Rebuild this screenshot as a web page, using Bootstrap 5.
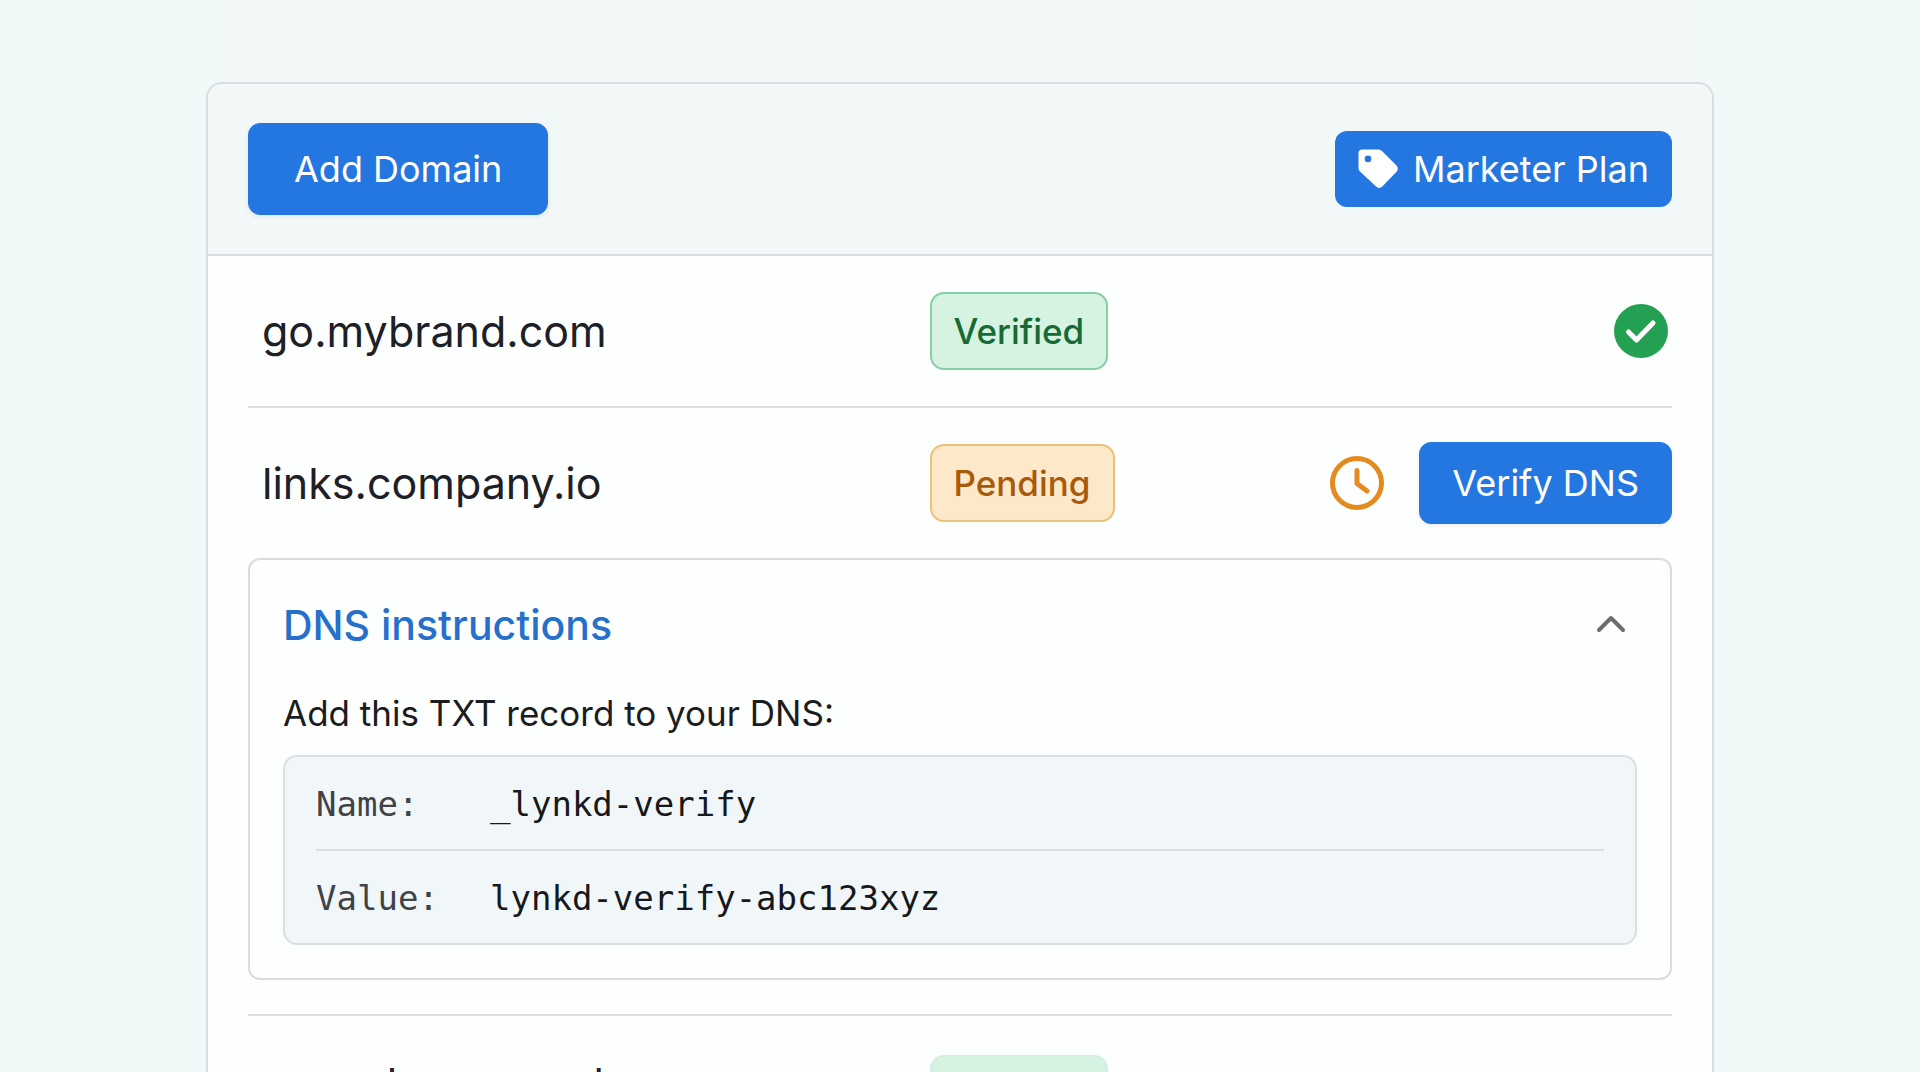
<!DOCTYPE html>
<html lang="en">
<head>
<meta charset="utf-8">
<meta name="viewport" content="width=device-width, initial-scale=1">
<title>Custom domains</title>
<link href="https://cdn.jsdelivr.net/npm/bootstrap@5.3.0/dist/css/bootstrap.min.css" rel="stylesheet">
<style>
  body { font-family: Inter, "Liberation Sans", sans-serif; color: #1d2027; background: linear-gradient(90deg, #f0f8f8, #f2f8f8 12%, #f2f8f8 88%, #f0f8f8); }
  .page { padding: 82px 24px 0; }
  .domains { max-width: 1508px; border: 2px solid #d9dddf; border-radius: 16px; background: #fdfefe; }
  .domains-head { padding: 39px 40px; background: #f2f7f8; border-bottom: 2px solid #d9dddf; border-radius: 14px 14px 0 0; }
  .domains-body { padding: 0 40px; }
  .action { --bs-btn-bg: #2477e0; --bs-btn-border-color: #2477e0; --bs-btn-hover-bg: #1c69cb; --bs-btn-color: #fff; --bs-btn-hover-color: #fff; font-size: 36px; line-height: 44px; border-radius: 12px; box-shadow: 0 2px 4px rgba(60, 50, 40, .08); }
  .action-lg { padding: 23px 45px; }
  .action-md { padding: 18px 32px; }
  .plan { background: #2477e0; color: #fff; font-size: 36px; line-height: 44px; padding: 16px 23px; border-radius: 12px; gap: 15px; }
  .domain-row { min-height: 150px; }
  .domain-item + .domain-item { border-top: 2px solid #dcdee0; }
  .domain-name { flex: 0 0 calc(48% - 2px); padding-left: 14px; font-size: 43px; line-height: 56px; }
  .status { font-size: 35px; font-weight: 500; line-height: 44px; padding: 15px 22px; border: 2px solid; border-radius: 14px; }
  .status-ok { color: #186a35; background: #d6f2e1; border-color: #86cfa6; }
  .status-wait { color: #a85a0b; background: #fee8ca; border-color: #ecc078; }
  .state-icon { width: 54px; height: 54px; }
  .row-tools { gap: 35px; }
  .dns { border: 2px solid #d9dbdd; border-radius: 12px; padding: 37px 33px 33px; margin-bottom: 34px; }
  .dns-title { color: #2670cc; font-size: 41px; font-weight: 500; line-height: 56px; }
  .dns-text { color: #1b1c1f; font-size: 35px; line-height: 48px; margin: 36px 0 18px; }
  .record { background: #f1f6f8; border: 2px solid #dcdfe1; border-radius: 14px; padding: 0 31px; }
  .record table { font-family: "DejaVu Sans Mono", monospace; font-size: 34px; line-height: 44px; }
  .record th { width: 174px; padding: 25px 0 23px; color: #3f4348; font-weight: 400; }
  .record td { padding: 25px 0 23px; color: #16181b; }
  .record tr + tr { border-top: 2px solid #dcdfe1; }
  .last-row { padding-top: 39px; }
  .last-row .status-ok { border-color: #d3eee0; }
</style>
</head>
<body>
<main class="page vh-100 overflow-hidden">
  <section class="domains mx-auto" aria-label="Domains">
    <header class="domains-head d-flex align-items-center justify-content-between">
      <button type="button" class="btn action action-lg">Add Domain</button>
      <span class="plan d-inline-flex align-items-center">
        <svg width="40" height="40" viewBox="0 0 40 40" aria-hidden="true"><path fill="#fff" fill-rule="evenodd" d="M4 .5h16.500a5 5 0 0 1 3.500 1.500l14.500 14.500a4.500 4.500 0 0 1 0 6.300L24.300 37.600a4.500 4.500 0 0 1-6.300 0L2 22.500A5 5 0 0 1 .5 19V4A3.500 3.500 0 0 1 4 .5zM10 6.600a3.300 3.300 0 1 0 0 6.600a3.300 3.300 0 0 0 0-6.600z"/></svg>
        Marketer Plan
      </span>
    </header>
    <ul class="domains-body list-unstyled mb-0">
      <li class="domain-item">
        <div class="domain-row d-flex align-items-center">
          <span class="domain-name">go.mybrand.com</span>
          <span class="status status-ok">Verified</span>
          <svg class="state-icon ms-auto me-1" viewBox="0 0 54 54" role="img" aria-label="Verified"><circle cx="27" cy="27" r="27" fill="#23a052"/><path d="M14.500 28l8 8L39 19" fill="none" stroke="#fff" stroke-width="5" stroke-linecap="round" stroke-linejoin="round"/></svg>
        </div>
      </li>
      <li class="domain-item">
        <div class="domain-row d-flex align-items-center">
          <span class="domain-name">links.company.io</span>
          <span class="status status-wait">Pending</span>
          <div class="row-tools d-flex align-items-center ms-auto">
            <svg class="state-icon" viewBox="0 0 54 54" fill="none" stroke="#e58a1f" role="img" aria-label="Pending"><circle cx="27" cy="27" r="24.500" stroke-width="5"/><path d="M27 14.500V27.500l10 7.500" stroke-width="5" stroke-linecap="round" stroke-linejoin="round"/></svg>
            <button type="button" class="btn action action-md">Verify DNS</button>
          </div>
        </div>
        <div class="dns">
          <div class="d-flex align-items-center justify-content-between">
            <h2 class="dns-title mb-0">DNS instructions</h2>
            <button type="button" class="btn border-0 p-0 me-2 lh-1" aria-label="Collapse DNS instructions" aria-expanded="true">
              <svg width="36" height="36" viewBox="0 0 36 36" fill="none" stroke="#6c6e72" stroke-width="4" stroke-linecap="round" stroke-linejoin="round"><path d="M6 23L18 11l12 12"/></svg>
            </button>
          </div>
          <p class="dns-text">Add this TXT record to your DNS:</p>
          <div class="record">
            <table class="w-100">
              <tbody>
                <tr><th scope="row">Name:</th><td>_lynkd-verify</td></tr>
                <tr><th scope="row">Value:</th><td>lynkd-verify-abc123xyz</td></tr>
              </tbody>
            </table>
          </div>
        </div>
      </li>
      <li class="domain-item last-row d-flex align-items-start">
        <span class="domain-name">cares.lensmaps.bz</span>
        <span class="status status-ok">Verified</span>
      </li>
    </ul>
  </section>
</main>
<script src="https://cdn.jsdelivr.net/npm/bootstrap@5.3.0/dist/js/bootstrap.bundle.min.js"></script>
</body>
</html>
